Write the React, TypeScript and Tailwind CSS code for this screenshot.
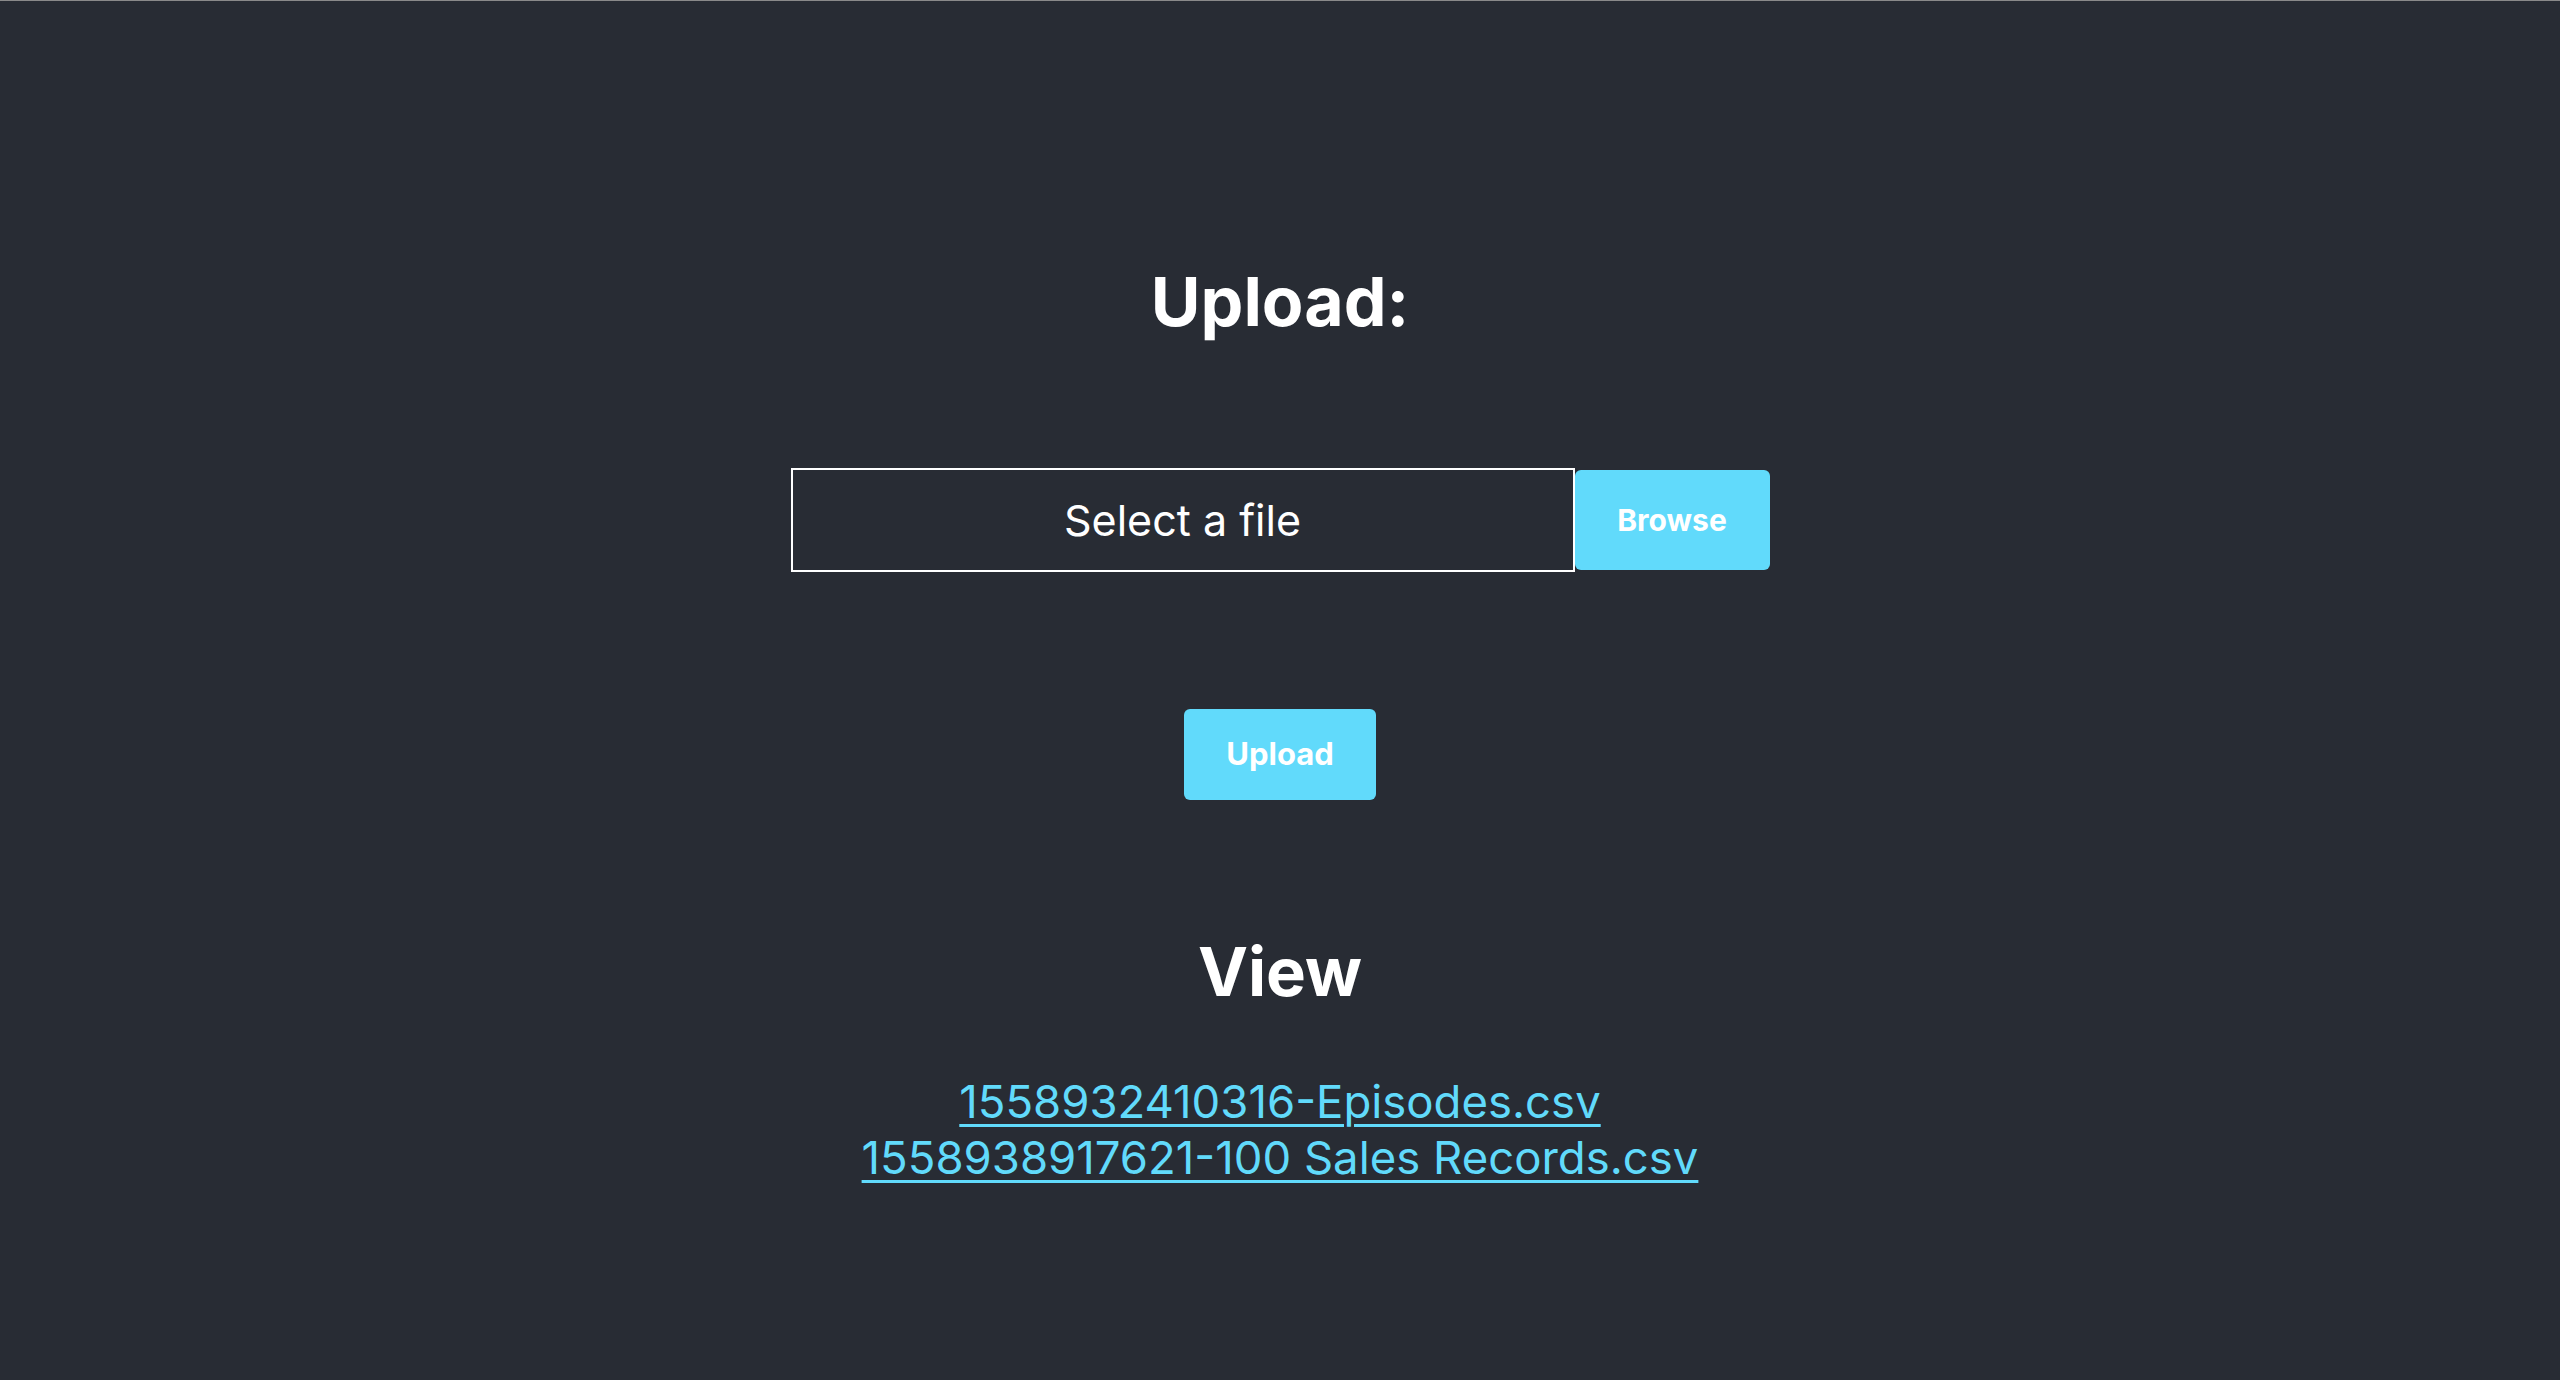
import React from "react";

const files = ["1558932410316-Episodes.csv", "1558938917621-100 Sales Records.csv"];

const App = () => {
  return (
    <div
      className="min-h-[1380px] w-full bg-[#282c34] border-t border-[#8a8a8a] flex flex-col items-center text-white"
      style={{ fontFamily: "Inter, 'Noto Sans', sans-serif" }}
    >
      <h2 className="mt-[265px] text-[68px] leading-[71px] font-bold">Upload:</h2>

      <div className="mt-[131px] flex items-center">
        <div className="w-[784px] h-[104px] border-2 border-white flex items-center justify-center text-[43px] font-normal">
          Select a file
        </div>
        <button className="w-[195px] h-[100px] bg-[#61dafb] rounded-[6px] text-[30px] font-bold text-white">
          Browse
        </button>
      </div>

      <button className="mt-[137px] w-[192px] h-[91px] bg-[#61dafb] rounded-[6px] text-[31px] font-bold text-white">
        Upload
      </button>

      <h2 className="mt-[136px] text-[67px] leading-[71px] font-bold">View</h2>

      <div className="mt-[67px] flex flex-col items-center">
        {files.map((f) => (
          <a
            key={f}
            href="#"
            className="text-[45.5px] leading-[56px] text-[#61dafb] underline decoration-[3px] underline-offset-[6px]"
          >
            {f}
          </a>
        ))}
      </div>
    </div>
  );
};

export default App;
